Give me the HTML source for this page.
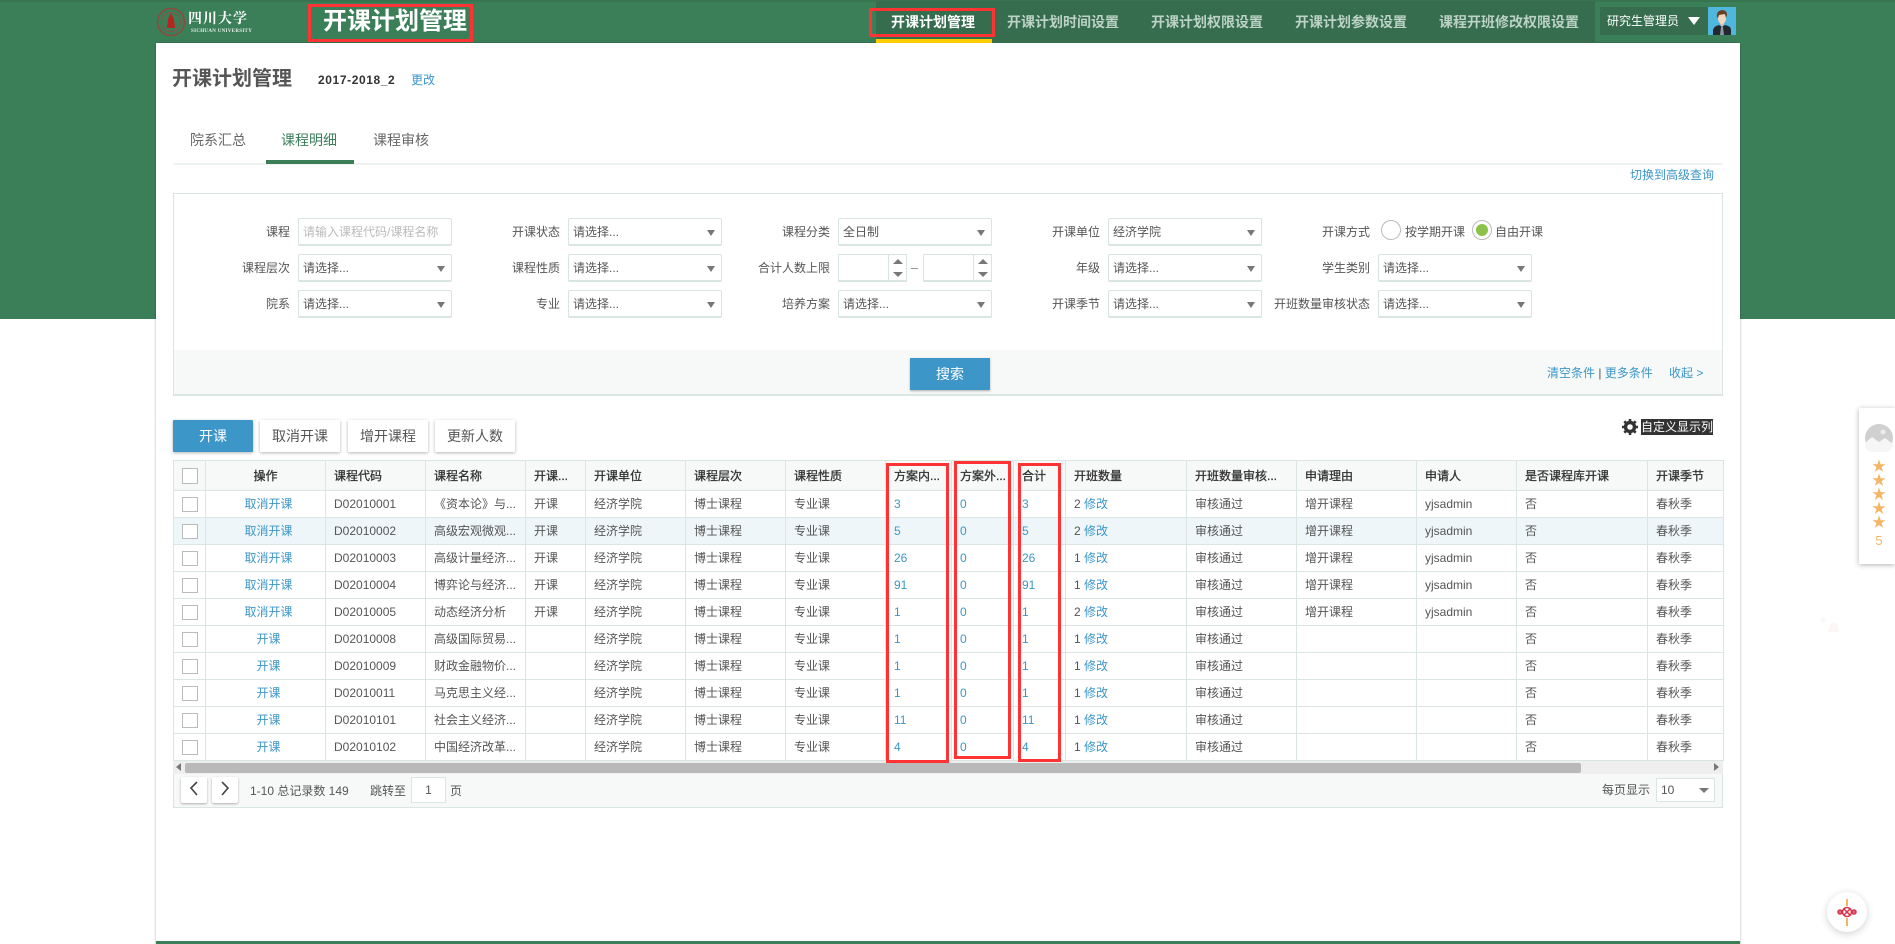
<!DOCTYPE html>
<html lang="zh"><head><meta charset="utf-8"><title>开课计划管理</title>
<style>
*{box-sizing:border-box}
html,body{margin:0;padding:0}
body{width:1895px;height:944px;position:relative;overflow:hidden;background:#fff;font-family:"Liberation Sans","Noto Sans CJK SC",sans-serif;font-size:12px;color:#555}
.a{position:absolute;white-space:nowrap}
.blue{color:#3c96c8}
.lb{position:absolute;width:110px;text-align:right;line-height:29px;height:28px;white-space:nowrap}
.sel{position:absolute;width:154px;height:28px;border:1px solid #d9e5e2;border-bottom-width:2px;background:#fff;line-height:27px;padding-left:4px;border-radius:2px}
.sel:after{content:"";position:absolute;right:6px;top:11px;border:4.5px solid transparent;border-top:6px solid #777;border-bottom:0}
.sel.nop:after{display:none}
.num{position:absolute;width:69px;height:28px;border:1px solid #d9e5e2;border-bottom-width:2px;background:#fff}
.num i{position:absolute;left:49px;top:0;bottom:0;border-left:1px solid #d9e5e2;width:18px}
.num i:before{content:"";position:absolute;left:4px;top:4px;border:5px solid transparent;border-bottom:5px solid #777;border-top:0}
.num i:after{content:"";position:absolute;left:4px;top:17px;border:5px solid transparent;border-top:5px solid #777;border-bottom:0}
.nav{position:absolute;top:0;height:43px;line-height:44px;font-size:14px;font-weight:bold;color:#bcd2c5;white-space:nowrap}
.btn{position:absolute;top:420px;width:80px;height:32px;line-height:32px;text-align:center;font-size:14px;background:#fff;color:#555;box-shadow:0 1px 3px rgba(0,0,0,.3);border-radius:1px}
table{position:absolute;left:173px;top:460px;width:1550px;table-layout:fixed;border-collapse:collapse;background:#fff;color:#555}
th,td{border:1px solid #dbe6e3;padding:1px 0 0 8px;height:27px;line-height:25px;font-size:12px;text-align:left;white-space:nowrap;overflow:hidden;font-weight:normal}
th{height:30px;background:#f7f9f8;color:#333;-webkit-text-stroke:.3px #333}
td.c,th.c{padding:0;-webkit-text-stroke:0}
td.o{text-align:center;padding:1px 0 0 6px;color:#3c96c8}
th.o{text-align:center;padding:1px 0 0}
td b,td a{font-weight:normal;color:#3c96c8;text-decoration:none}
tr.h td{background:#eef6f9}
.ck{display:block;width:16px;height:16px;border:1px solid #bbb;margin:0 0 0 8px;background:#fff}
td .ck{height:15px}
.red{position:absolute;border:3px solid #f33}
.star{position:absolute;left:1871px;width:16px;height:14px;line-height:14px;text-align:center;color:#f5b565;font-size:14px}
</style></head><body>

<div class="a" style="left:0;top:0;width:1895px;height:319px;background:#3b7f59"></div>
<div class="a" style="left:0;top:0;width:1895px;height:2px;background:#37744f"></div>
<div class="a" style="left:156px;top:43px;width:1584px;height:901px;background:#fff;box-shadow:0 0 2px rgba(0,0,0,.35)"></div>
<div class="a" style="left:156px;top:941px;width:1584px;height:3px;background:#3b7f59"></div>

<!-- logo -->
<svg class="a" style="left:156px;top:7px" width="30" height="30" viewBox="0 0 30 30"><circle cx="15" cy="15" r="13.5" fill="none" stroke="#8e4a3e" stroke-width="1.6"/><circle cx="15" cy="15" r="9.5" fill="none" stroke="#7d5a48" stroke-width="1.2"/><path d="M15 6l3 6 1 9h-8l1-9z" fill="#b5261e"/></svg>
<div class="a" style="left:188px;top:8px;color:#fff;font:bold 14px/20px 'Noto Serif CJK SC',serif;letter-spacing:1px">四川大学</div>
<div class="a" style="left:191px;top:28px;color:#e8efe9;font:bold 5px/7px 'Liberation Serif',serif;letter-spacing:.3px">SICHUAN UNIVERSITY</div>

<div class="a" style="left:308px;top:4px;width:165px;height:38px;border:3px solid #f33"></div>
<div class="a" style="left:323px;top:4px;line-height:36px;font-size:24px;font-weight:bold;color:#fff">开课计划管理</div>

<!-- nav -->
<div class="a" style="left:876px;top:1px;width:719px;height:42px;background:#356d4e"></div>
<div class="a" style="left:876px;top:39px;width:116px;height:4px;background:#fc0"></div>
<div class="nav" style="left:891px;color:#fff">开课计划管理</div>
<div class="nav" style="left:1007px">开课计划时间设置</div>
<div class="nav" style="left:1151px">开课计划权限设置</div>
<div class="nav" style="left:1295px">开课计划参数设置</div>
<div class="nav" style="left:1439px">课程开班修改权限设置</div>
<div class="a" style="left:869px;top:8px;width:126px;height:29px;border:3px solid #f33"></div>
<div class="a" style="left:1600px;top:7px;width:108px;height:28px;background:#356d4e;color:#fff;font-size:12px;line-height:28px;padding-left:7px">研究生管理员</div>
<div class="a" style="left:1688px;top:17px;border:6px solid transparent;border-top:8px solid #fff;border-bottom:0"></div>
<svg class="a" style="left:1708px;top:7px" width="28" height="28" viewBox="0 0 28 28"><rect width="28" height="28" fill="#4fb6de"/><path d="M5 28v-5q1-4 6-5l3 2 3-2q6 1 6 5v5z" fill="#23282e"/><path d="M12 17l2 3 2-3v-3h-4z" fill="#e6c3a8"/><ellipse cx="14" cy="11.500" rx="4" ry="5.500" fill="#f4d5bd"/><path d="M9 10q-1-6 5-7 5 0 5 5l-1 3-1-4-6 1-1 3z" fill="#6a3f22"/><path d="M13 20h2l1 8h-4z" fill="#8b98a0"/></svg>

<!-- heading -->
<div class="a" style="left:172px;top:64px;font-size:20px;font-weight:bold;line-height:30px;color:#555">开课计划管理</div>
<div class="a" style="left:318px;top:72px;font-size:12px;font-weight:bold;line-height:16px;color:#333;letter-spacing:.6px">2017-2018_2</div>
<div class="a blue" style="left:411px;top:72px;line-height:16px">更改</div>

<!-- tabs -->
<div class="a" style="left:173px;top:163px;width:1550px;height:2px;background:#eef2f1"></div>
<div class="a" style="left:266px;top:160px;width:88px;height:4px;background:#3b7f59"></div>
<div class="a" style="left:190px;top:130px;font-size:14px;line-height:20px;color:#666">院系汇总</div>
<div class="a" style="left:281px;top:130px;font-size:14px;line-height:20px;color:#3b7f59">课程明细</div>
<div class="a" style="left:373px;top:130px;font-size:14px;line-height:20px;color:#666">课程审核</div>
<div class="a blue" style="left:1630px;top:167px;line-height:16px">切换到高级查询</div>

<!-- filter -->
<div class="a" style="left:173px;top:193px;width:1550px;height:203px;border:1px solid #dbe6e3;border-bottom-width:2px;background:#fff"></div>
<div class="a" style="left:174px;top:350px;width:1548px;height:44px;background:#f7f9f8"></div>

<div class="lb" style="left:180px;top:218px">课程</div>
<div class="sel nop" style="left:298px;top:218px;color:#bbb">请输入课程代码/课程名称</div>
<div class="lb" style="left:180px;top:254px">课程层次</div><div class="sel" style="left:298px;top:254px">请选择...</div>
<div class="lb" style="left:180px;top:290px">院系</div><div class="sel" style="left:298px;top:290px">请选择...</div>

<div class="lb" style="left:450px;top:218px">开课状态</div><div class="sel" style="left:568px;top:218px">请选择...</div>
<div class="lb" style="left:450px;top:254px">课程性质</div><div class="sel" style="left:568px;top:254px">请选择...</div>
<div class="lb" style="left:450px;top:290px">专业</div><div class="sel" style="left:568px;top:290px">请选择...</div>

<div class="lb" style="left:720px;top:218px">课程分类</div><div class="sel" style="left:838px;top:218px">全日制</div>
<div class="lb" style="left:720px;top:254px">合计人数上限</div>
<div class="num" style="left:838px;top:254px"><i></i></div>
<div class="a" style="left:911px;top:268px;width:7px;height:1px;background:#999"></div>
<div class="num" style="left:923px;top:254px"><i></i></div>
<div class="lb" style="left:720px;top:290px">培养方案</div><div class="sel" style="left:838px;top:290px">请选择...</div>

<div class="lb" style="left:990px;top:218px">开课单位</div><div class="sel" style="left:1108px;top:218px">经济学院</div>
<div class="lb" style="left:990px;top:254px">年级</div><div class="sel" style="left:1108px;top:254px">请选择...</div>
<div class="lb" style="left:990px;top:290px">开课季节</div><div class="sel" style="left:1108px;top:290px">请选择...</div>

<div class="lb" style="left:1260px;top:218px">开课方式</div>
<div class="a" style="left:1381px;top:220px;width:20px;height:20px;border:1px solid #bbb;border-radius:50%;background:#fff"></div>
<div class="a" style="left:1405px;top:218px;line-height:29px">按学期开课</div>
<div class="a" style="left:1472px;top:220px;width:20px;height:20px;border:1px solid #bbb;border-radius:50%;background:#fff"></div>
<div class="a" style="left:1476px;top:224px;width:12px;height:12px;border-radius:50%;background:#8bc34a"></div>
<div class="a" style="left:1495px;top:218px;line-height:29px">自由开课</div>
<div class="lb" style="left:1260px;top:254px">学生类别</div><div class="sel" style="left:1378px;top:254px">请选择...</div>
<div class="lb" style="left:1260px;top:290px">开班数量审核状态</div><div class="sel" style="left:1378px;top:290px">请选择...</div>

<div class="a" style="left:910px;top:358px;width:80px;height:32px;background:#3c96c8;color:#fff;font-size:14px;line-height:32px;text-align:center;box-shadow:0 1px 2px rgba(0,0,0,.3)">搜索</div>
<div class="a blue" style="left:1547px;top:365px;line-height:16px">清空条件 <span style="color:#555">|</span> 更多条件</div>
<div class="a blue" style="left:1669px;top:365px;line-height:16px">收起 &gt;</div>

<!-- buttons -->
<div class="btn" style="left:173px;background:#3c96c8;color:#fff">开课</div>
<div class="btn" style="left:260px">取消开课</div>
<div class="btn" style="left:348px">增开课程</div>
<div class="btn" style="left:435px">更新人数</div>

<svg class="a" style="left:1622px;top:419px" width="16" height="16" viewBox="0 0 16 16"><circle cx="8" cy="8" r="4.500" fill="none" stroke="#333" stroke-width="3.400"/><g stroke="#333" stroke-width="2.600"><path d="M8 0v3M8 13v3M0 8h3M13 8h3M2.300 2.300l2.100 2.100M11.600 11.600l2.100 2.100M2.300 13.700l2.100-2.100M11.600 4.400l2.100-2.100"/></g></svg>
<div class="a" style="left:1641px;top:419px;height:16px;line-height:16px;background:#333;color:#fff">自定义显示列</div>

<!-- table -->
<table>
<colgroup><col style="width:32px"><col style="width:120px"><col style="width:100px"><col style="width:100px"><col style="width:60px"><col style="width:100px"><col style="width:100px"><col style="width:100px"><col style="width:66px"><col style="width:62px"><col style="width:52px"><col style="width:121px"><col style="width:110px"><col style="width:120px"><col style="width:100px"><col style="width:131px"><col style="width:76px"></colgroup>
<tr><th class="c"><span class="ck"></span></th><th class="o">操作</th><th>课程代码</th><th>课程名称</th><th>开课...</th><th>开课单位</th><th>课程层次</th><th>课程性质</th><th>方案内...</th><th>方案外...</th><th>合计</th><th>开班数量</th><th>开班数量审核...</th><th>申请理由</th><th>申请人</th><th>是否课程库开课</th><th>开课季节</th></tr>
<tr><td class="c"><span class="ck"></span></td><td class="o">取消开课</td><td>D02010001</td><td>《资本论》与...</td><td>开课</td><td>经济学院</td><td>博士课程</td><td>专业课</td><td><b>3</b></td><td><b>0</b></td><td><b>3</b></td><td>2 <a>修改</a></td><td>审核通过</td><td>增开课程</td><td>yjsadmin</td><td>否</td><td>春秋季</td></tr>
<tr class="h"><td class="c"><span class="ck"></span></td><td class="o">取消开课</td><td>D02010002</td><td>高级宏观微观...</td><td>开课</td><td>经济学院</td><td>博士课程</td><td>专业课</td><td><b>5</b></td><td><b>0</b></td><td><b>5</b></td><td>2 <a>修改</a></td><td>审核通过</td><td>增开课程</td><td>yjsadmin</td><td>否</td><td>春秋季</td></tr>
<tr><td class="c"><span class="ck"></span></td><td class="o">取消开课</td><td>D02010003</td><td>高级计量经济...</td><td>开课</td><td>经济学院</td><td>博士课程</td><td>专业课</td><td><b>26</b></td><td><b>0</b></td><td><b>26</b></td><td>1 <a>修改</a></td><td>审核通过</td><td>增开课程</td><td>yjsadmin</td><td>否</td><td>春秋季</td></tr>
<tr><td class="c"><span class="ck"></span></td><td class="o">取消开课</td><td>D02010004</td><td>博弈论与经济...</td><td>开课</td><td>经济学院</td><td>博士课程</td><td>专业课</td><td><b>91</b></td><td><b>0</b></td><td><b>91</b></td><td>1 <a>修改</a></td><td>审核通过</td><td>增开课程</td><td>yjsadmin</td><td>否</td><td>春秋季</td></tr>
<tr><td class="c"><span class="ck"></span></td><td class="o">取消开课</td><td>D02010005</td><td>动态经济分析</td><td>开课</td><td>经济学院</td><td>博士课程</td><td>专业课</td><td><b>1</b></td><td><b>0</b></td><td><b>1</b></td><td>2 <a>修改</a></td><td>审核通过</td><td>增开课程</td><td>yjsadmin</td><td>否</td><td>春秋季</td></tr>
<tr><td class="c"><span class="ck"></span></td><td class="o">开课</td><td>D02010008</td><td>高级国际贸易...</td><td></td><td>经济学院</td><td>博士课程</td><td>专业课</td><td><b>1</b></td><td><b>0</b></td><td><b>1</b></td><td>1 <a>修改</a></td><td>审核通过</td><td></td><td></td><td>否</td><td>春秋季</td></tr>
<tr><td class="c"><span class="ck"></span></td><td class="o">开课</td><td>D02010009</td><td>财政金融物价...</td><td></td><td>经济学院</td><td>博士课程</td><td>专业课</td><td><b>1</b></td><td><b>0</b></td><td><b>1</b></td><td>1 <a>修改</a></td><td>审核通过</td><td></td><td></td><td>否</td><td>春秋季</td></tr>
<tr><td class="c"><span class="ck"></span></td><td class="o">开课</td><td>D02010011</td><td>马克思主义经...</td><td></td><td>经济学院</td><td>博士课程</td><td>专业课</td><td><b>1</b></td><td><b>0</b></td><td><b>1</b></td><td>1 <a>修改</a></td><td>审核通过</td><td></td><td></td><td>否</td><td>春秋季</td></tr>
<tr><td class="c"><span class="ck"></span></td><td class="o">开课</td><td>D02010101</td><td>社会主义经济...</td><td></td><td>经济学院</td><td>博士课程</td><td>专业课</td><td><b>11</b></td><td><b>0</b></td><td><b>11</b></td><td>1 <a>修改</a></td><td>审核通过</td><td></td><td></td><td>否</td><td>春秋季</td></tr>
<tr><td class="c"><span class="ck"></span></td><td class="o">开课</td><td>D02010102</td><td>中国经济改革...</td><td></td><td>经济学院</td><td>博士课程</td><td>专业课</td><td><b>4</b></td><td><b>0</b></td><td><b>4</b></td><td>1 <a>修改</a></td><td>审核通过</td><td></td><td></td><td>否</td><td>春秋季</td></tr>
</table>

<!-- scrollbar + pagination -->
<div class="a" style="left:173px;top:761px;width:1550px;height:13px;background:#eee"></div>
<div class="a" style="left:185px;top:763px;width:1396px;height:10px;background:#b9b9b9;border-radius:2px"></div>
<div class="a" style="left:176px;top:763px;border:4px solid transparent;border-right:5px solid #777;border-left:0"></div>
<div class="a" style="left:1714px;top:763px;border:4px solid transparent;border-left:5px solid #777;border-right:0"></div>
<div class="a" style="left:173px;top:774px;width:1550px;height:34px;background:#f7f9f8;border:1px solid #dbe6e3;border-top:0;border-bottom-width:1px"></div>
<div class="a" style="left:181px;top:777px;width:26px;height:26px;background:#fff;box-shadow:0 1px 2px rgba(0,0,0,.3);border-radius:2px"></div>
<div class="a" style="left:212px;top:777px;width:26px;height:26px;background:#fff;box-shadow:0 1px 2px rgba(0,0,0,.3);border-radius:2px"></div>
<svg class="a" style="left:181px;top:777px" width="57" height="26" viewBox="0 0 57 26"><path d="M16 5l-6 6 6 7" fill="none" stroke="#444" stroke-width="1.600"/><path d="M41 5l6 6-6 7" fill="none" stroke="#444" stroke-width="1.600"/></svg>
<div class="a" style="left:250px;top:782px;line-height:18px">1-10 总记录数 149</div>
<div class="a" style="left:370px;top:782px;line-height:18px">跳转至</div>
<div class="a" style="left:411px;top:777px;width:35px;height:26px;border:1px solid #dbe6e3;background:#fff;text-align:center;line-height:24px">1</div>
<div class="a" style="left:450px;top:782px;line-height:18px">页</div>
<div class="a" style="left:1602px;top:781px;line-height:18px">每页显示</div>
<div class="a" style="left:1656px;top:778px;width:59px;height:24px;border:1px solid #dbe6e3;background:#fff;line-height:22px;padding-left:4px;font-size:12px">10</div>
<div class="a" style="left:1699px;top:788px;border:5px solid transparent;border-top:5px solid #777;border-bottom:0"></div>

<!-- red boxes -->
<div class="red" style="left:886px;top:463px;width:63px;height:300px"></div>
<div class="red" style="left:954px;top:461px;width:57px;height:298px"></div>
<div class="red" style="left:1018px;top:463px;width:43px;height:299px"></div>

<!-- side widget -->
<div class="a" style="left:1859px;top:408px;width:36px;height:156px;background:#fff;box-shadow:0 1px 5px rgba(0,0,0,.3)"></div>
<svg class="a" style="left:1865px;top:424px" width="28" height="28" viewBox="0 0 28 28"><circle cx="14" cy="14" r="14" fill="#d0d0d0"/><path d="M0 19l7-6 7 5 6-4 8 6v1a14 9 0 0 1-28 0z" fill="#f6f6f6"/><circle cx="18" cy="8" r="2.500" fill="#ececec"/></svg>
<div class="star" style="top:459px">★</div>
<div class="star" style="top:473px">★</div>
<div class="star" style="top:487px">★</div>
<div class="star" style="top:501px">★</div>
<div class="star" style="top:515px">★</div>
<div class="a" style="left:1871px;top:533px;width:16px;text-align:center;line-height:16px;font-size:13px;color:#f5b565">5</div>

<!-- knot button -->
<div class="a" style="left:1827px;top:892px;width:40px;height:40px;border-radius:50%;background:#fff;box-shadow:0 2px 8px rgba(0,0,0,.18)"></div>
<svg class="a" style="left:1837px;top:899px" width="20" height="27" viewBox="0 0 20 27"><path d="M10 0v7M10 19v8" stroke="#f5b565" stroke-width="2"/><g fill="none" stroke="#d8324a" stroke-width="1.500"><circle cx="10" cy="13" r="4.500"/><path d="M5.500 13H1M14.500 13H19M6.500 9.500l7 7M13.500 9.500l-7 7"/><circle cx="3" cy="13" r="2"/><circle cx="17" cy="13" r="2"/></g></svg>

<!-- faint snowman -->
<svg class="a" style="left:1814px;top:612px" width="28" height="22" viewBox="0 0 28 22" opacity=".15"><circle cx="9" cy="8" r="3" fill="#dde"/><path d="M14 20q1-9 6-10 4 1 5 10z" fill="#eecdc8"/></svg>
</body></html>
